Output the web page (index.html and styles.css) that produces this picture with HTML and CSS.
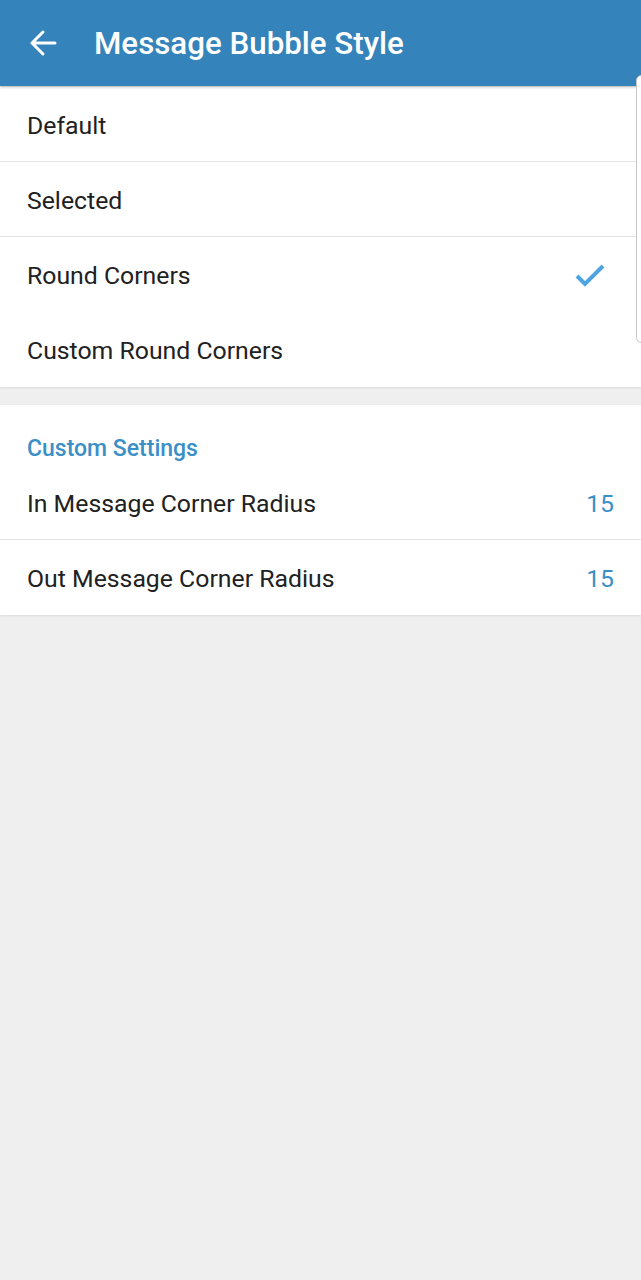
FILE: index.html
```html
<!DOCTYPE html>
<html lang="en">
<head>
    <meta charset="UTF-8">
    <meta name="viewport" content="width=device-width, initial-scale=1.0">
    <title>Message Bubble Style</title>
    <link rel="stylesheet" href="styles.css">
</head>
<body>
    <header class="toolbar">
        <button class="back" aria-label="Back">
            <svg width="28" height="28" viewBox="0 0 28 28">
                <path d="M26 14H3M14 3L3 14l11 11" fill="none" stroke="#fff" stroke-width="3" stroke-linecap="round" stroke-linejoin="round"/>
            </svg>
        </button>
        <h1 class="title">Message Bubble Style</h1>
    </header>

    <section class="card">
        <div class="row">Default</div>
        <div class="row">Selected</div>
        <div class="row no-line">
            <span>Round Corners</span>
            <svg class="check" width="32" height="26" viewBox="0 0 32 26">
                <path d="M3 14l8 8L29 4" fill="none" stroke="#4ea4e0" stroke-width="4"/>
            </svg>
        </div>
        <div class="row no-line">Custom Round Corners</div>
    </section>

    <section class="card second">
        <div class="section-title">Custom Settings</div>
        <div class="row"><span>In Message Corner Radius</span><span class="value">15</span></div>
        <div class="row no-line"><span>Out Message Corner Radius</span><span class="value">15</span></div>
    </section>

    <div class="scroller"></div>
</body>
</html>
```

FILE: styles.css
```css
*{
    margin: 0;
    padding: 0;
    box-sizing: border-box;
}
body{
    min-height: 100vh;
    background: #efefef;
    font-family: Roboto, "Noto Sans", sans-serif;
    color: #212121;
    position: relative;
}
.toolbar {
    height: 86px;
    background: #3483bb;
    display: flex;
    align-items: center;
    padding-left: 29px;
    box-shadow: 0 1px 3px rgba(0,0,0,0.25);
    position: relative;
    z-index: 1;
}
.back {
    background: none;
    border: 0;
    width: 28px;
    height: 28px;
    display: flex;
    margin-right: 37px;
}
.title {
    color: #fff;
    font-size: 31.3px;
    font-weight: 500;
    padding-top: 1px;
}
.card {
    background: #fff;
    margin-top: 1px;
    box-shadow: 0 1px 2px rgba(0,0,0,0.08);
}
.card.second {
    margin-top: 18px;
}
.row {
    height: 75px;
    display: flex;
    align-items: center;
    justify-content: space-between;
    padding: 2px 27px 0;
    font-size: 24.8px;
    border-bottom: 1px solid #e3e3e3;
}
.row.no-line {
    border-bottom: 0;
}
.check {
    margin-right: 8px;
    margin-top: -2px;
}
.value {
    color: #3a8fc7;
}
.section-title {
    color: #3a8fc7;
    font-size: 23px;
    font-weight: 500;
    line-height: 28px;
    padding: 30px 27px 0;
    height: 60px;
}
.scroller {
    position: absolute;
    right: -6px;
    top: 75px;
    width: 11px;
    height: 268px;
    border: 1px solid #c8c8c8;
    border-radius: 8px;
    background: #fff;
    z-index: 2;
}
```
